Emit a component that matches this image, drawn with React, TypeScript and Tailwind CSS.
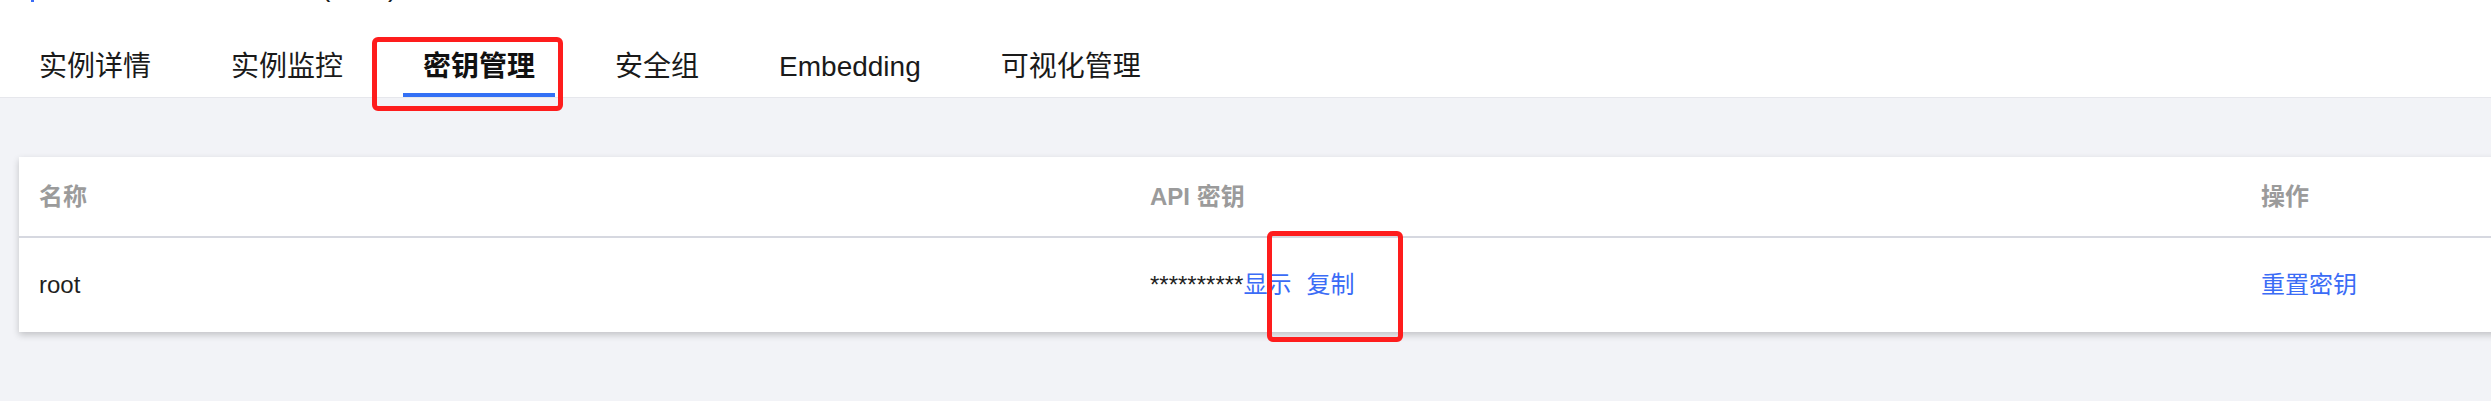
import React from "react";

const tabs = ["实例详情", "实例监控", "密钥管理", "安全组", "Embedding", "可视化管理"];

export default function App() {
  return (
    <div
      className="relative w-[2491px] h-[401px] overflow-hidden bg-[#f2f3f7]"
      style={{ fontFamily: '"Liberation Sans", Arial, "Noto Sans CJK SC", sans-serif' }}
    >
      {/* header */}
      <div className="bg-white">
        <div className="h-[5px] overflow-hidden relative">
          <span className="absolute left-[31px] top-0 w-[3px] h-[2px] bg-[#3b6cf6]" />
          <div className="-mt-[29px] pl-[321px] text-[28px] leading-[32px] text-[#1a1a1a] whitespace-nowrap">
            (ABC)
          </div>
        </div>
        <div className="flex h-[92px] items-end pl-[19px] gap-[40px]">
          {tabs.map((t, i) => (
            <div
              key={t}
              className={
                i === 2
                  ? "px-[20px] pb-[6px] border-b-4 border-[#3370f5] text-[28px] leading-[40px] font-bold text-[#111]"
                  : "px-[20px] pb-[6px] border-b-4 border-transparent text-[28px] leading-[40px] text-[#1a1a1a]"
              }
            >
              {t}
            </div>
          ))}
        </div>
      </div>
      <div className="h-px bg-[#e6e7ec]" />

      {/* content */}
      <div className="pt-[59px] pl-[19px]">
        <div className="w-[3333px] bg-white shadow-[0_3px_7px_rgba(0,0,0,0.2)]">
          <div className="grid grid-cols-3 h-[79px] items-center text-[24px] font-semibold text-[#9b9b9b]">
            <div className="pl-[20px]">名称</div>
            <div className="pl-[20px]">API 密钥</div>
            <div className="pl-[20px]">操作</div>
          </div>
          <div className="h-[2px] bg-[#d6d8e0]" />
          <div className="grid grid-cols-3 h-[94px] items-center text-[24px] text-[#1f1f1f]">
            <div className="pl-[20px]">root</div>
            <div className="pl-[20px] flex items-center whitespace-nowrap">
              <span>**********</span>
              <span className="text-[#3b6cf6]">显示</span>
              <span className="ml-[15px] text-[#3b6cf6]">复制</span>
            </div>
            <div className="pl-[20px] text-[#3b6cf6]">重置密钥</div>
          </div>
        </div>
      </div>

      {/* annotation boxes */}
      <div className="absolute left-[372px] top-[37px] w-[191px] h-[74px] border-[5px] border-[#fe1d1d] rounded-[6px]" />
      <div className="absolute left-[1267px] top-[231px] w-[136px] h-[111px] border-[5px] border-[#fe1d1d] rounded-[6px]" />
    </div>
  );
}
